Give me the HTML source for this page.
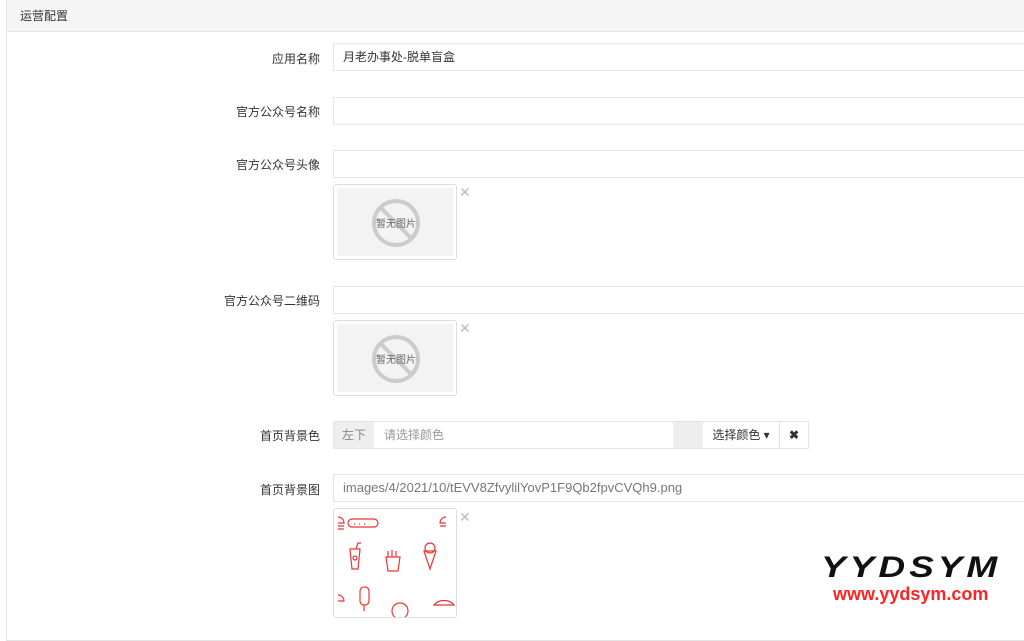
<!DOCTYPE html>
<html><head><meta charset="utf-8"><style>
body{margin:0;width:1024px;height:613px;overflow:hidden;background:#fff;font-family:"Liberation Sans","Noto Sans CJK SC",sans-serif;font-size:12px;color:#333;position:relative}
.panel{position:absolute;left:6px;top:0;right:-2px;height:640px;border:1px solid #e3e3e3;border-top:none}
.hd{position:absolute;left:6px;top:0;right:0;height:31px;background:#f5f5f5;border-bottom:1px solid #e5e5e5;border-left:1px solid #e3e3e3}
.hd span{position:absolute;left:13px;top:7px}
.lbl{position:absolute;right:704px;text-align:right;white-space:nowrap}
.inp{position:absolute;left:333px;right:-2px;height:28px;border:1px solid #e5e5e5;box-sizing:border-box;padding-left:9px;line-height:26px}
.img{position:absolute;left:333px;width:124px;height:76px;border:1px solid #ddd;border-radius:3px;box-sizing:border-box;background:#fff;overflow:hidden}
.img .in{position:absolute;left:3px;top:3px;right:3px;bottom:3px;background:#f3f3f3}
.x{position:absolute;left:459px;color:#bbb;font-size:14px}
</style></head><body>
<div class="panel"></div>
<div class="hd"><span>运营配置</span></div>

<div class="lbl" style="top:50px">应用名称</div>
<div class="inp" style="top:43px">月老办事处-脱单盲盒</div>

<div class="lbl" style="top:103px">官方公众号名称</div>
<div class="inp" style="top:97px"></div>

<div class="lbl" style="top:156px">官方公众号头像</div>
<div class="inp" style="top:150px"></div>
<div class="img" style="top:184px"><div class="in">
<svg width="118" height="70" style="position:absolute;left:0;top:0"><circle cx="59" cy="35" r="22" fill="none" stroke="#ccc" stroke-width="4"/><line x1="44" y1="20" x2="74" y2="50" stroke="#ccc" stroke-width="4"/><text x="59" y="39" font-size="10" text-anchor="middle" fill="#666" font-family="Noto Sans CJK SC">暂无图片</text></svg></div></div>
<div class="x" style="top:184px">✕</div>

<div class="lbl" style="top:292px">官方公众号二维码</div>
<div class="inp" style="top:286px"></div>
<div class="img" style="top:320px"><div class="in">
<svg width="118" height="70" style="position:absolute;left:0;top:0"><circle cx="59" cy="35" r="22" fill="none" stroke="#ccc" stroke-width="4"/><line x1="44" y1="20" x2="74" y2="50" stroke="#ccc" stroke-width="4"/><text x="59" y="39" font-size="10" text-anchor="middle" fill="#666" font-family="Noto Sans CJK SC">暂无图片</text></svg></div></div>
<div class="x" style="top:320px">✕</div>

<div class="lbl" style="top:427px">首页背景色</div>
<div style="position:absolute;left:333px;top:421px;width:476px;height:28px;border:1px solid #e5e5e5;box-sizing:border-box">
<div style="position:absolute;left:0;top:0;width:40px;height:26px;background:#eee;color:#888;line-height:26px;text-align:center">左下</div>
<div style="position:absolute;left:50px;top:0;line-height:26px;color:#999">请选择颜色</div>
<div style="position:absolute;left:339px;top:0;width:30px;height:26px;background:#eee"></div>
<div style="position:absolute;left:369px;top:0;width:76px;height:26px;border-right:1px solid #e5e5e5;line-height:26px;text-align:center">选择颜色 ▾</div>
<div style="position:absolute;left:446px;top:0;width:28px;height:26px;line-height:26px;text-align:center;font-weight:bold">✖</div>
</div>

<div class="lbl" style="top:481px">首页背景图</div>
<div class="inp" style="top:474px;color:#777;font-size:13px">images/4/2021/10/tEVV8ZfvylilYovP1F9Qb2fpvCVQh9.png</div>
<div class="img" style="top:508px;height:110px">
<svg width="122" height="110" fill="none" stroke="#e33" stroke-width="1.2">
<path d="M4 8a6 6 0 0 1 6 6h-6M4 17h6M4 20h6"/><rect x="14" y="10" width="30" height="8" rx="4"/><path d="M20 15h1M25 15h1M30 15h1"/>
<path d="M112 8a6 6 0 0 0 -6 6h6M106 17h6"/><path d="M16 40h10l-2 20h-6zM22 40l2-6h3"/><circle cx="21" cy="49" r="2"/>
<path d="M52 48h14l-2 14h-10zM54 48v-6M58 48v-7M62 48v-6"/><path d="M90 42h12l-6 18z"/><circle cx="96" cy="39" r="5"/>
<path d="M4 86a6 6 0 0 1 6 6h-6"/><rect x="26" y="78" width="9" height="18" rx="4"/><path d="M30 96v6"/>
<circle cx="66" cy="102" r="8"/><path d="M100 96a12 10 0 0 1 20 0z"/></svg></div>
<div class="x" style="top:509px">✕</div>

<div style="position:absolute;left:821px;top:552px;font:italic 900 37px 'Liberation Sans',sans-serif;letter-spacing:4px;color:#111;line-height:38px;transform:scaleY(0.8);transform-origin:top left">YYDSYM</div>
<div style="position:absolute;left:833px;top:584px;font:bold 18px 'Liberation Sans',sans-serif;color:#f22;line-height:20px">www.yydsym.com</div>
</body></html>
